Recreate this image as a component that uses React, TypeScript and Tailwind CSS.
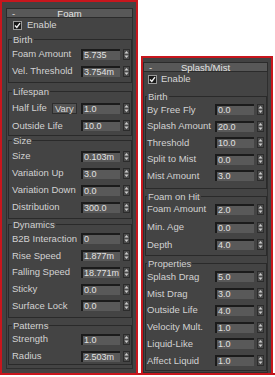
import React from 'react';

const font = "font-['Liberation_Sans',Arial,sans-serif]";

function Arrows() {
  return (
    <svg width="7" height="11" viewBox="0 0 7 11" className="shrink-0">
      <rect x="0" y="0" width="7" height="11" fill="#4c4c4c" />
      <rect x="0.5" y="0.5" width="6" height="10" fill="none" stroke="#2c2c2c" />
      <path d="M3.5 2 L5.5 4.5 L1.5 4.5 Z" fill="#cfcfcf" />
      <path d="M3.5 9 L5.5 6.5 L1.5 6.5 Z" fill="#cfcfcf" />
    </svg>
  );
}

function Spinner({ value }: { value: string }) {
  return (
    <div className="flex items-center gap-[3px]">
      <div className="w-[39px] h-[11px] bg-[#595959] border-t-2 border-l-2 border-[#1b1b1b] pl-[1px] text-[9px] leading-[9px] text-[#e2e2e2] overflow-hidden whitespace-nowrap">
        {value}
      </div>
      <Arrows />
    </div>
  );
}

type Row = { label: string; value: string; vary?: boolean; h?: string };

function Group({ title, rows, cls, rowH }: { title: string; rows: Row[]; cls: string; rowH: string }) {
  return (
    <fieldset className={`border border-[#2a2a2a] ml-[1px] ${cls}`}>
      <legend className="px-[1px] text-[9.5px] leading-[9px] text-[#d2d2d2]">{title}</legend>
      {rows.map((r) => (
        <div key={r.label} className={`flex items-center justify-between ${r.h ?? rowH}`}>
          <div className="flex items-center">
            <span className="text-[9.5px] text-[#d2d2d2] whitespace-nowrap">{r.label}</span>
            {r.vary && (
              <span className="ml-[5px] w-[25px] h-[11px] bg-[#545454] border border-[#2e2e2e] text-[9.5px] leading-[9px] text-[#d8d8d8] flex items-center justify-center">
                Vary
              </span>
            )}
          </div>
          <Spinner value={r.value} />
        </div>
      ))}
    </fieldset>
  );
}

function TitleBar({ title }: { title: string }) {
  return (
    <div className="relative h-[10px] bg-[#585858] border border-[#2b2b2b] flex items-center justify-center">
      <span className="absolute left-[5px] top-[-2px] text-[9.5px] text-[#e0e0e0]">-</span>
      <span className="text-[9.5px] leading-[9px] text-[#e4e4e4]">{title}</span>
    </div>
  );
}

function Enable({ cls }: { cls: string }) {
  return (
    <div className={`flex items-center h-[15px] ${cls}`}>
      <div className="w-[9px] h-[9px] bg-[#1a1a1a] border border-[#9a9a9a] flex items-center justify-center">
        <svg width="7" height="7" viewBox="0 0 7 7">
          <path d="M1 3.6 L2.8 5.4 L6 1.2" fill="none" stroke="#f2f2f2" strokeWidth="1.4" />
        </svg>
      </div>
      <span className="text-[9.5px] text-[#d6d6d6]">Enable</span>
    </div>
  );
}

function FoamPanel() {
  return (
    <div className="w-[138px] h-[373px] border-2 border-b-0 border-[#c8161d] bg-[#424242] pt-[6px] pl-[4px] pr-[3px]">
      <TitleBar title="Foam" />
      <div className="bg-[#444444] border-x border-b border-[#2e2e2e] pb-[3px]">
        <Enable cls="pl-[6px] gap-[5px]" />
        <Group
          title="Birth"
          cls="mt-[1.5px] pl-[3px] pr-[1px] pt-[2px] pb-[2px]"
          rowH="h-[17px]"
          rows={[
            { label: 'Foam Amount', value: '5.735' },
            { label: 'Vel. Threshold', value: '3.754m' },
          ]}
        />
        <Group
          title="Lifespan"
          cls="mt-[4px] pl-[3px] pr-[1px] pt-[4px]"
          rowH="h-[17.5px]"
          rows={[
            { label: 'Half Life', value: '1.0', vary: true },
            { label: 'Outside Life', value: '10.0' },
          ]}
        />
        <Group
          title="Size"
          cls="pl-[3px] pr-[1px] pt-[3px] pb-[2px]"
          rowH="h-[17px]"
          rows={[
            { label: 'Size', value: '0.103m' },
            { label: 'Variation Up', value: '3.0' },
            { label: 'Variation Down', value: '0.0' },
            { label: 'Distribution', value: '300.0' },
          ]}
        />
        <Group
          title="Dynamics"
          cls="mt-[1px] pl-[3px] pr-[1px] pt-[2px] pb-[3px]"
          rowH="h-[16.75px]"
          rows={[
            { label: 'B2B Interaction', value: '0' },
            { label: 'Rise Speed', value: '1.877m' },
            { label: 'Falling Speed', value: '18.771m' },
            { label: 'Sticky', value: '0.0' },
            { label: 'Surface Lock', value: '0.0' },
          ]}
        />
        <Group
          title="Patterns"
          cls="mt-[3px] pl-[3px] pr-[1px] pt-[1px]"
          rowH="h-[16.5px]"
          rows={[
            { label: 'Strength', value: '1.0' },
            { label: 'Radius', value: '2.503m' },
          ]}
        />
      </div>
    </div>
  );
}

function SplashPanel() {
  return (
    <div className="mt-[56px] w-[132px] h-[317px] border-2 border-b-0 border-[#c8161d] bg-[#424242] pt-[4px] pr-[3px]">
      <TitleBar title="Splash/Mist" />
      <div className="bg-[#444444] border-x border-b border-[#2e2e2e] pb-[1px]">
        <Enable cls="pl-[4px] gap-[4px]" />
        <Group
          title="Birth"
          cls="mt-[4.5px] pl-[1px] pr-[2px] pt-[1px] pb-[4px]"
          rowH="h-[16.5px]"
          rows={[
            { label: 'By Free Fly', value: '0.0' },
            { label: 'Splash Amount', value: '20.0' },
            { label: 'Threshold', value: '10.0' },
            { label: 'Split to Mist', value: '0.0' },
            { label: 'Mist Amount', value: '3.0' },
          ]}
        />
        <Group
          title="Foam on Hit"
          cls="mt-[2.5px] pl-[1px] pr-[2px] pb-[1px]"
          rowH="h-[17.75px]"
          rows={[
            { label: 'Foam Amount', value: '2.0' },
            { label: 'Min. Age', value: '0.0' },
            { label: 'Depth', value: '4.0' },
          ]}
        />
        <Group
          title="Properties"
          cls="mt-[2.75px] pl-[1px] pr-[2px] pt-[1px] pb-[1px]"
          rowH="h-[16.75px]"
          rows={[
            { label: 'Splash Drag', value: '5.0' },
            { label: 'Mist Drag', value: '3.0' },
            { label: 'Outside Life', value: '4.0' },
            { label: 'Velocity Mult.', value: '1.0' },
            { label: 'Liquid-Like', value: '1.0' },
            { label: 'Affect Liquid', value: '1.0' },
          ]}
        />
      </div>
    </div>
  );
}

export default function App() {
  return (
    <div className={`w-[275px] h-[377px] bg-white ${font}`}>
      <div className="flex items-start gap-[3px] h-[373px]">
        <FoamPanel />
        <SplashPanel />
      </div>
      <div className="h-[2px] bg-[#c8161d]" />
    </div>
  );
}
